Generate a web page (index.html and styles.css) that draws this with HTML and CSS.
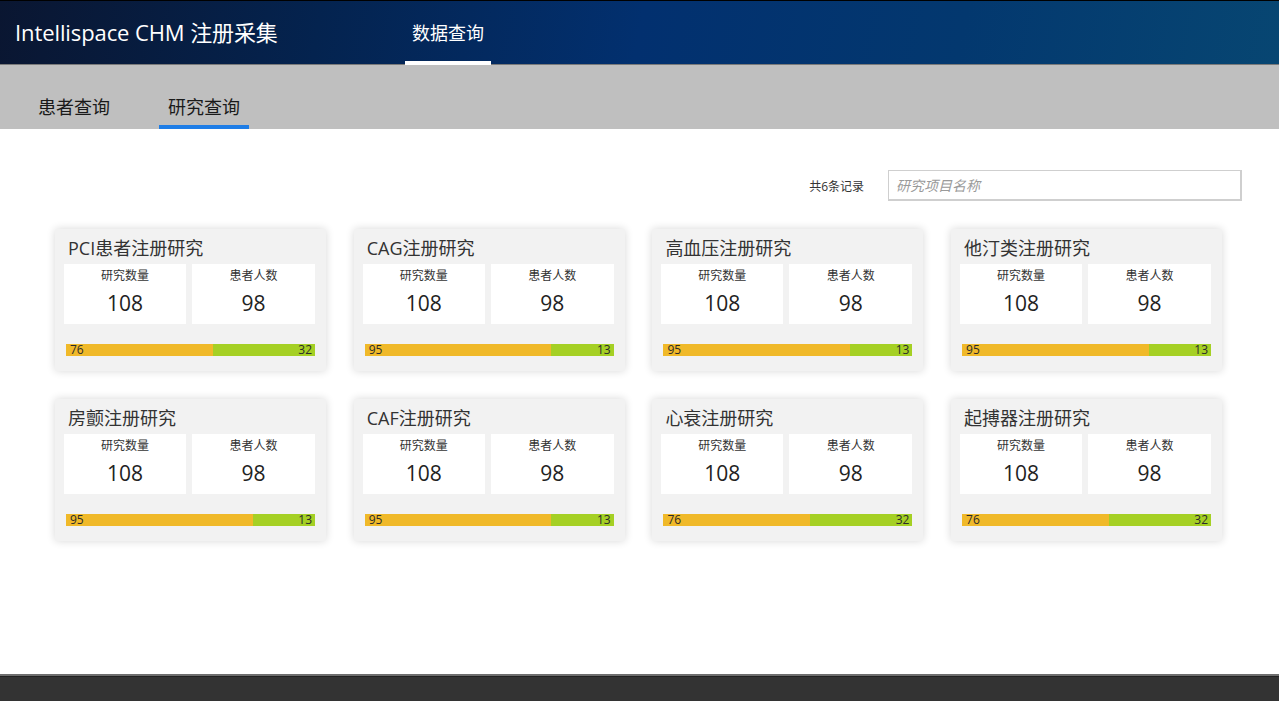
FILE: index.html
```html
<!DOCTYPE html>
<html lang="zh-CN">
<head>
<meta charset="utf-8">
<title>Intellispace CHM 注册采集</title>
<link rel="stylesheet" href="styles.css">
</head>
<body>
<header class="topbar">
  <div class="brand">Intellispace CHM 注册采集</div>
  <nav class="mainnav">
    <a class="mainnav-item active">数据查询</a>
  </nav>
</header>
<div class="subnav">
  <a class="subnav-item">患者查询</a>
  <a class="subnav-item active">研究查询</a>
</div>
<main class="content">
  <div class="toolbar">
    <span class="count">共6条记录</span>
    <input class="search" type="text" placeholder="研究项目名称">
  </div>
  <div class="grid">
    <div class="card">
      <div class="card-title">PCI患者注册研究</div>
      <div class="stats">
        <div class="stat"><div class="stat-label">研究数量</div><div class="stat-value">108</div></div>
        <div class="stat"><div class="stat-label">患者人数</div><div class="stat-value">98</div></div>
      </div>
      <div class="bar"><div class="bar-a" style="width:59%">76</div><div class="bar-b">32</div></div>
    </div>
    <div class="card">
      <div class="card-title">CAG注册研究</div>
      <div class="stats">
        <div class="stat"><div class="stat-label">研究数量</div><div class="stat-value">108</div></div>
        <div class="stat"><div class="stat-label">患者人数</div><div class="stat-value">98</div></div>
      </div>
      <div class="bar"><div class="bar-a" style="width:75%">95</div><div class="bar-b">13</div></div>
    </div>
    <div class="card">
      <div class="card-title">高血压注册研究</div>
      <div class="stats">
        <div class="stat"><div class="stat-label">研究数量</div><div class="stat-value">108</div></div>
        <div class="stat"><div class="stat-label">患者人数</div><div class="stat-value">98</div></div>
      </div>
      <div class="bar"><div class="bar-a" style="width:75%">95</div><div class="bar-b">13</div></div>
    </div>
    <div class="card">
      <div class="card-title">他汀类注册研究</div>
      <div class="stats">
        <div class="stat"><div class="stat-label">研究数量</div><div class="stat-value">108</div></div>
        <div class="stat"><div class="stat-label">患者人数</div><div class="stat-value">98</div></div>
      </div>
      <div class="bar"><div class="bar-a" style="width:75%">95</div><div class="bar-b">13</div></div>
    </div>
    <div class="card">
      <div class="card-title">房颤注册研究</div>
      <div class="stats">
        <div class="stat"><div class="stat-label">研究数量</div><div class="stat-value">108</div></div>
        <div class="stat"><div class="stat-label">患者人数</div><div class="stat-value">98</div></div>
      </div>
      <div class="bar"><div class="bar-a" style="width:75%">95</div><div class="bar-b">13</div></div>
    </div>
    <div class="card">
      <div class="card-title">CAF注册研究</div>
      <div class="stats">
        <div class="stat"><div class="stat-label">研究数量</div><div class="stat-value">108</div></div>
        <div class="stat"><div class="stat-label">患者人数</div><div class="stat-value">98</div></div>
      </div>
      <div class="bar"><div class="bar-a" style="width:75%">95</div><div class="bar-b">13</div></div>
    </div>
    <div class="card">
      <div class="card-title">心衰注册研究</div>
      <div class="stats">
        <div class="stat"><div class="stat-label">研究数量</div><div class="stat-value">108</div></div>
        <div class="stat"><div class="stat-label">患者人数</div><div class="stat-value">98</div></div>
      </div>
      <div class="bar"><div class="bar-a" style="width:59%">76</div><div class="bar-b">32</div></div>
    </div>
    <div class="card">
      <div class="card-title">起搏器注册研究</div>
      <div class="stats">
        <div class="stat"><div class="stat-label">研究数量</div><div class="stat-value">108</div></div>
        <div class="stat"><div class="stat-label">患者人数</div><div class="stat-value">98</div></div>
      </div>
      <div class="bar"><div class="bar-a" style="width:59%">76</div><div class="bar-b">32</div></div>
    </div>
  </div>
</main>
<footer class="footer"></footer>
</body>
</html>
```

FILE: styles.css
```css
* { box-sizing: border-box; }
html, body { margin: 0; padding: 0; }
body {
  height: 100vh;
  display: flex;
  flex-direction: column;
  font-family: "Open Sans", "Noto Sans CJK SC", sans-serif;
  color: #333;
  background: #fff;
  overflow: hidden;
}
.topbar {
  height: 65px;
  flex: none;
  display: flex;
  align-items: stretch;
  background: linear-gradient(100deg, #0a1631 0%, #04234f 25%, #02306f 50%, #03386f 75%, #074672 100%);
  border-top: 1px solid #000;
  border-bottom: 1px solid #7a7a7a;
}
.brand {
  color: #fff;
  font-size: 22px;
  line-height: 63px;
  padding-left: 15px;
  width: 405px;
  letter-spacing: -0.1px;
}
.mainnav { display: flex; }
.mainnav-item {
  color: #fff;
  font-size: 18px;
  line-height: 65px;
  width: 86px;
  text-align: center;
  position: relative;
}
.mainnav-item.active::after {
  content: "";
  position: absolute;
  left: 0; right: 0; bottom: -1px;
  height: 4px;
  background: #fff;
}
.subnav {
  height: 64px;
  flex: none;
  background: #bfbfbf;
  display: flex;
  align-items: flex-end;
  padding-left: 29px;
  gap: 40px;
}
.subnav-item {
  font-size: 18px;
  color: #1a1a1a;
  width: 90px;
  text-align: center;
  padding-bottom: 4px;
  line-height: 28px;
  border-bottom: 4px solid transparent;
}
.subnav-item.active { border-bottom-color: #1e7de6; }
.content {
  flex: 1;
  padding: 41px 37px 0 55px;
}
.toolbar {
  display: flex;
  justify-content: flex-end;
  align-items: center;
  gap: 24px;
  height: 31px;
}
.count { font-size: 12px; color: #333; }
.search {
  width: 354px;
  height: 31px;
  border: 1px solid #cfcfcf;
  border-right-width: 2px;
  border-bottom-width: 2px;
  padding: 0 7px;
  font-family: inherit;
  font-size: 14px;
  outline: none;
}
.search::placeholder { color: #9a9a9a; font-style: italic; }
.grid {
  margin-top: 28px;
  display: grid;
  grid-template-columns: repeat(4, 271px);
  column-gap: 27.7px;
  row-gap: 28px;
}
.card {
  height: 142px;
  background: #f2f2f2;
  box-shadow: 0 0 8px rgba(0,0,0,0.16);
  border-radius: 2px;
  padding: 7px 11px 0 9px;
}
.card-title {
  font-size: 18px;
  line-height: 25px;
  color: #333;
  padding-left: 4px;
  white-space: nowrap;
}
.stats {
  margin-top: 3px;
  display: grid;
  grid-template-columns: 122px 123px;
  column-gap: 6px;
}
.stat {
  background: #fff;
  height: 60px;
  text-align: center;
  padding-top: 4px;
}
.stat-label { font-size: 12px; line-height: 16px; color: #333; }
.stat-value { font-size: 21px; line-height: 28px; margin-top: 5px; color: #222; }
.bar {
  margin: 20px 0 0 2px;
  height: 12px;
  display: flex;
  background: #a5d024;
  font-size: 12px;
  line-height: 12px;
  color: #2b2b2b;
}
.bar-a { background: #f0b929; padding-left: 4px; height: 12px; }
.bar-b { flex: 1; text-align: right; padding-right: 3px; height: 12px; }
.footer {
  flex: none;
  height: 27px;
  background: #333;
  border-top: 2px solid #6e6e6e;
  box-shadow: inset 0 1px 0 #222;
}
```
